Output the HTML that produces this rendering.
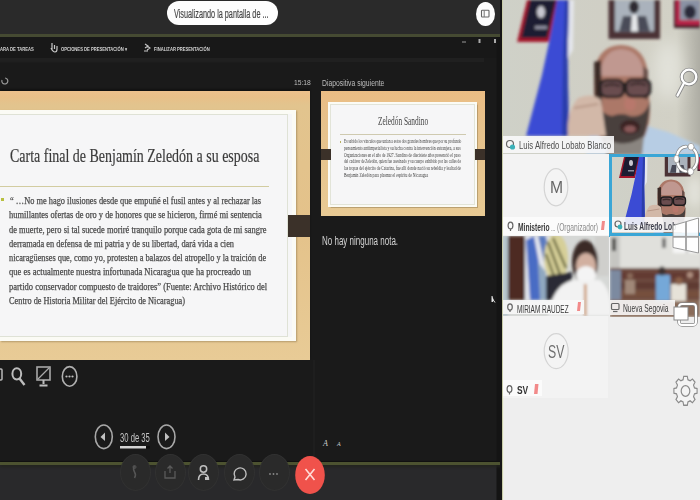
<!DOCTYPE html>
<html><head><meta charset="utf-8">
<style>
*{margin:0;padding:0;box-sizing:border-box}
html,body{width:700px;height:500px;overflow:hidden;background:#1b1b1b;font-family:"Liberation Sans",sans-serif}
.abs{position:absolute}
.sx{transform-origin:0 0}
#left{position:absolute;left:0;top:0;width:502px;height:500px;background:#1a1a1a;overflow:hidden}
#topbar{left:0;top:0;width:502px;height:34px;background:#2a2a2a}
#olive{left:0;top:34px;width:502px;height:3px;background:#454a32}
#toolbar{left:0;top:37px;width:502px;height:21px;background:#181818}
#sub{left:0;top:58px;width:484px;height:4px;background:#202020}
.tb{color:#d2d2d2;font-size:5px;font-weight:bold;top:46px;white-space:nowrap;transform-origin:0 0;transform:scaleX(0.83)}
#pill{left:166.5px;top:1.2px;width:111.5px;height:24px;border-radius:12px;background:#fdfdfd}
#pilltxt{left:174px;top:6.5px;font-size:12.5px;color:#3c3c3c;white-space:nowrap;-webkit-text-stroke:0.2px #555}
#cd{left:476px;top:1.5px;width:18.6px;height:24px;border-radius:50%;background:#fcfcfc}
#slide{left:0;top:91px;width:310px;height:269px;background:linear-gradient(180deg,#ecc08c 0px,#e8bf88 6px,#e2c48e 14px,#e4c28a 50%,#e8cb96 100%);box-shadow:0 -2px 2px rgba(0,0,0,0.35)}
#paper{left:0;top:110px;width:296px;height:231px;background:#f6f6f7;border:4px solid #fbfbf5;border-left:none;outline:none;box-shadow:1px 1px 1.5px rgba(120,100,60,0.45)}
#paperin{left:0;top:114px;width:288px;height:223px;border:1.5px solid #dfe2d6;border-left:none}
.serif{font-family:"Liberation Serif",serif}
#title{left:10px;top:146px;font-size:18.5px;color:#3a3a3a;-webkit-text-stroke:0.2px #444;filter:blur(0.3px);white-space:nowrap}
#hr{left:0;top:186px;width:269px;height:1px;background:#d2cca0}
.bl{position:absolute;left:9px;font-family:"Liberation Serif",serif;font-size:9.6px;color:#3e3e3e;-webkit-text-stroke:0.25px #555;filter:blur(0.3px);white-space:nowrap;transform-origin:0 0}
#tab{left:288px;top:215px;width:22px;height:22px;background:#3b3129}
#next{left:321px;top:91px;width:164px;height:125px;background:linear-gradient(180deg,#ebbd84 0%,#e6c28c 30%,#e8ca94 100%)}
#npaper{left:328px;top:102px;width:149px;height:105px;background:#f6f6f7;border:2px solid #fbfbf5;box-shadow:inset 0 0 0 1px #e2e4d8, 0.5px 0.5px 1px rgba(120,100,60,0.4)}
#ntitle{left:378px;top:115px;font-size:11.5px;color:#444;white-space:nowrap}
#nhr{left:340px;top:134px;width:126px;height:1px;background:#cfcab0}
.nb{position:absolute;left:344px;font-family:"Liberation Serif",serif;font-size:5.2px;color:#3a3a3a;white-space:nowrap;transform-origin:0 0}
#ntab{left:475px;top:149px;width:10px;height:11px;background:#3b3129}
#ntabl{left:321px;top:149px;width:10px;height:11px;background:#3b3129}
.gtxt{color:#bdbdbd;white-space:nowrap}
#bottombar{left:0;top:464px;width:502px;height:36px;background:#29292b}
#gline{left:0;top:461.5px;width:502px;height:3px;background:#4c5230}
.rb{position:absolute;width:31px;height:37px;border-radius:50%;background:#2a2a2a;border:1px solid #313131;top:454px}
#right{position:absolute;left:502px;top:0;width:198px;height:500px;background:#eeeeee;overflow:hidden}
.lbl{position:absolute;background:rgba(250,250,250,0.93)}
.lt{position:absolute;font-size:11px;color:#3a3a3a;white-space:nowrap;transform-origin:0 0}
</style></head><body>
<div id="left">
  <div class="abs" id="topbar"></div>
  <div class="abs" id="pill"></div>
  <div class="abs sx" id="pilltxt" style="transform:scaleX(0.582)">Visualizando la pantalla de ...</div>
  <div class="abs" id="cd"></div>
  <div class="abs" id="olive"></div>
  <div class="abs" id="toolbar"></div>
  <div class="abs" id="sub"></div>
  <div class="abs tb" style="left:0">ARA DE TAREAS</div>
  <div class="abs tb" style="left:61px">OPCIONES DE PRESENTACIÓN ▾</div>
  <div class="abs tb" style="left:154px">FINALIZAR PRESENTACIÓN</div>
  <div class="abs gtxt sx" style="left:294px;top:77.5px;font-size:8px;transform:scaleX(0.84)">15:18</div>
  <div class="abs gtxt sx" style="left:321.5px;top:77.5px;font-size:8.5px;transform:scaleX(0.8)">Diapositiva siguiente</div>
  <div class="abs" id="slide"></div>
  <div class="abs" id="paper"></div>
  <div class="abs" id="paperin"></div>
  <div class="abs serif sx" id="title" style="transform:scaleX(0.755)">Carta final de Benjamín Zeledón a su esposa</div>
  <div class="abs" id="hr"></div>
  <div class="abs" style="left:1px;top:198px;width:3px;height:3px;background:#b8c040"></div>
  <div class="bl" style="top:195px;left:10px;transform:scaleX(0.871)">“ …No me hago ilusiones desde que empuñé el fusil antes y al rechazar las</div>
  <div class="bl" style="top:209px;transform:scaleX(0.878)">humillantes ofertas de oro y de honores que se hicieron, firmé mi sentencia</div>
  <div class="bl" style="top:224px;transform:scaleX(0.877)">de muerte, pero si tal sucede moriré tranquilo porque cada gota de mi sangre</div>
  <div class="bl" style="top:238px;transform:scaleX(0.871)">derramada en defensa de mi patria y de su libertad, dará vida a cien</div>
  <div class="bl" style="top:252px;transform:scaleX(0.868)">nicaragüenses que, como yo, protesten a balazos del atropello y la traición de</div>
  <div class="bl" style="top:266px;transform:scaleX(0.890)">que es actualmente  nuestra infortunada Nicaragua que ha procreado un</div>
  <div class="bl" style="top:281px;transform:scaleX(0.884)">partido conservador compuesto de traidores” (Fuente: Archivo Histórico del</div>
  <div class="bl" style="top:295px;transform:scaleX(0.866)">Centro de Historia Militar del Ejército de Nicaragua)</div>
  <div class="abs" id="tab"></div>
  <div class="abs" id="next"></div>
  <div class="abs" id="npaper"></div>
  <div class="abs serif sx" id="ntitle" style="transform:scaleX(0.64)">Zeledón Sandino</div>
  <div class="abs" id="nhr"></div>
  <div class="nb" style="top:138.4px;transform:scaleX(0.684)">Es sabido los vínculos que unían a estos dos grandes hombres que por su profundo</div>
  <div class="nb" style="top:145.2px;transform:scaleX(0.713)">pensamiento antiimperialista y su lucha contra la intervención extranjera, a sus</div>
  <div class="nb" style="top:151.6px;transform:scaleX(0.709)">Organizaciones en el año de 1927. Sandino de diecisiete años presenció el paso</div>
  <div class="nb" style="top:158.3px;transform:scaleX(0.684)">del cadáver de Zeledón, quien fue asesinado y su cuerpo exhibido por las calles de</div>
  <div class="nb" style="top:165.1px;transform:scaleX(0.722)">las tropas del ejército de Catarina, fue allí donde nació su rebeldía y lealtad de</div>
  <div class="nb" style="top:172.2px;transform:scaleX(0.718)">Benjamín Zeledón para plasmar el espíritu de Nicaragua</div>
  <div class="abs" style="left:339.5px;top:141px;width:1.5px;height:1.5px;background:#b8b060"></div>
  <div class="abs" id="ntab"></div>
  <div class="abs" id="ntabl"></div>
  <div class="abs gtxt sx" style="left:322px;top:233.5px;font-size:12.5px;color:#d4d4d4;transform:scaleX(0.64)">No hay ninguna nota.</div>
  <div class="abs" id="gline"></div>
  <div class="abs" id="bottombar"></div>

<svg class="abs" style="left:0;top:0" width="502" height="500" viewBox="0 0 502 500">
  <!-- cd icon in circle -->
  <rect x="481.5" y="10.2" width="7.5" height="6.8" rx="0.8" fill="none" stroke="#666" stroke-width="1.1"/>
  <line x1="484.2" y1="10.5" x2="484.2" y2="17" stroke="#777" stroke-width="1"/>
  <!-- toolbar icons -->
  <path d="M52,43 v6 M54.5,45 v4 M51,48 q2,4 4,4 q2,0 2,-3 v-3" stroke="#c8c8c8" stroke-width="1.2" fill="none"/>
  <path d="M145,44 l3,2 -3,2 M147,46 l3,2 -3,2 M144,51 h4" stroke="#c8c8c8" stroke-width="1.1" fill="none"/>
  <line x1="462" y1="42" x2="466" y2="42" stroke="#999" stroke-width="1"/>
  <rect x="478.5" y="39" width="2" height="4" fill="#aaa"/>
  <rect x="494" y="39" width="2" height="4" fill="#aaa"/>
  <rect x="496.5" y="37" width="4" height="463" fill="#141414"/>
  <path d="M2,80 a3,3 0 1 0 3,-2" stroke="#999" stroke-width="1.2" fill="none"/>
  <line x1="314" y1="360" x2="314" y2="462" stroke="#222" stroke-width="1"/>
  <line x1="0" y1="62" x2="300" y2="62" stroke="#1f1f1f" stroke-width="1"/>
  <!-- bottom icons row -->
  <rect x="-3" y="369" width="5" height="11" rx="1" fill="none" stroke="#b8b8b8" stroke-width="1.5"/>
  <ellipse cx="16.8" cy="373.8" rx="4.4" ry="5.6" fill="none" stroke="#bdbdbd" stroke-width="2"/>
  <line x1="19.5" y1="378.5" x2="24.5" y2="385" stroke="#bdbdbd" stroke-width="2.4"/>
  <rect x="37" y="367" width="13" height="13" fill="none" stroke="#a8a8a8" stroke-width="1.6"/>
  <line x1="38" y1="379" x2="49" y2="368" stroke="#a8a8a8" stroke-width="1.2"/>
  <path d="M43.5,380 v4 M39.5,385.5 h8" stroke="#bdbdbd" stroke-width="2"/>
  <ellipse cx="69.6" cy="376.4" rx="7.3" ry="9.8" fill="none" stroke="#b0b0b0" stroke-width="1.6"/>
  <circle cx="66.5" cy="376.5" r="1.1" fill="#bdbdbd"/><circle cx="69.5" cy="376.5" r="1.1" fill="#bdbdbd"/><circle cx="72.5" cy="376.5" r="1.1" fill="#bdbdbd"/>
  <!-- pager -->
  <ellipse cx="103.8" cy="436.8" rx="8.5" ry="11.8" fill="none" stroke="#a8a8a8" stroke-width="1.6"/>
  <path d="M105,432.5 L100.5,437 L105,441 Z" fill="#c0c0c0"/>
  <ellipse cx="166.5" cy="436.8" rx="8.5" ry="11.8" fill="none" stroke="#a8a8a8" stroke-width="1.6"/>
  <path d="M165,432.5 L169.5,437 L165,441 Z" fill="#c0c0c0"/>
  <rect x="120" y="446" width="26" height="2.5" fill="#d4d4d4"/>
  <rect x="146" y="446" width="4" height="2.5" fill="#0d0d0d"/>
  <!-- small A's near notes -->
  <text x="323" y="446" font-family="Liberation Serif" font-size="8" fill="#cfcfcf" font-style="italic">A</text>
  <text x="337" y="446" font-family="Liberation Serif" font-size="6" fill="#cfcfcf" font-style="italic">A</text>
  <!-- cursor -->
  <path d="M492,296 l0,6 l1.5,-1.5 l1.5,2" stroke="#ddd" stroke-width="1" fill="#eee"/>
</svg>
<div class="abs" id="gline2" style="left:0;top:461.5px;width:502px;height:3px;background:#4c5230;box-shadow:0 -1px 1px #101010, 0 2px 3px #22231e"></div>
<div class="rb" style="left:120px"></div>
<div class="rb" style="left:154.5px"></div>
<div class="rb" style="left:188px"></div>
<div class="rb" style="left:223.5px"></div>
<div class="rb" style="left:259px"></div>
<svg class="abs" style="left:0;top:440px" width="502" height="60" viewBox="0 440 502 60">
  <path d="M134.5,466 q-2,3 0,6 q2,3 0,6" stroke="#555" stroke-width="1.5" fill="none"/>
  <circle cx="134.5" cy="467" r="1.5" fill="none" stroke="#555" stroke-width="1"/>
  <path d="M165,471 v7 h10 v-7 M170,466 v7 M167.5,468.5 l2.5,-2.5 2.5,2.5" stroke="#5a5a5a" stroke-width="1.3" fill="none"/>
  <circle cx="203.5" cy="469" r="3.2" fill="none" stroke="#c0c0c0" stroke-width="1.5"/>
  <path d="M198.5,480 q0,-6 5,-6 q5,0 5,6" stroke="#c0c0c0" stroke-width="1.6" fill="none"/>
  <rect x="205" y="477" width="4" height="3" fill="#c0c0c0"/>
  <path d="M234,480 l1,-3 a6,6 0 1 1 3,2.5 z" stroke="#c0c0c0" stroke-width="1.4" fill="none"/>
  <circle cx="270" cy="474" r="0.9" fill="#888"/><circle cx="273.5" cy="474" r="0.9" fill="#888"/><circle cx="277" cy="474" r="0.9" fill="#888"/>
  <ellipse cx="310" cy="475" rx="14.8" ry="19" fill="#f0524b"/>
  <path d="M305.5,469 l9,11 M314.5,469 l-9,11" stroke="#ffdcd8" stroke-width="1.6"/>
</svg>
  <div class="abs gtxt sx" style="left:120px;top:430.5px;font-size:12px;color:#c4c4c4;transform:scaleX(0.64)">30 de 35</div>
</div>
<div class="abs" style="left:500px;top:0;width:2px;height:500px;background:#161616;z-index:1"></div>
<div class="abs" style="left:501.5px;top:0;width:1px;height:500px;background:#c8cca8;z-index:1"></div>
<div id="right">
<svg width="198" height="500" viewBox="502 0 198 500" style="position:absolute;left:0;top:0">
<defs>
  <filter id="bl1" x="-10%" y="-10%" width="120%" height="120%"><feGaussianBlur stdDeviation="1.4"/></filter>
  <filter id="bl2" x="-50%" y="-50%" width="200%" height="200%"><feGaussianBlur stdDeviation="8"/></filter>
  <linearGradient id="wall1" x1="0" y1="0" x2="1" y2="0">
    <stop offset="0" stop-color="#cfd1c8"/><stop offset="0.5" stop-color="#d0cfc5"/><stop offset="0.88" stop-color="#d2d1c6"/><stop offset="1" stop-color="#aeada4"/>
  </linearGradient>
  <radialGradient id="skin" cx="0.5" cy="0.35" r="0.6">
    <stop offset="0" stop-color="#c8a898"/><stop offset="1" stop-color="#a07868"/>
  </radialGradient>
  <clipPath id="c1"><rect x="503" y="0" width="197" height="154"/></clipPath>
  <clipPath id="c2"><rect x="612" y="157" width="88" height="76"/></clipPath>
  <clipPath id="c3"><rect x="503" y="236" width="106" height="80"/></clipPath>
  <clipPath id="c4"><rect x="610" y="236" width="90" height="81"/></clipPath>
  <g id="scene1">
    <rect x="503" y="0" width="197" height="154" fill="url(#wall1)"/>
    <ellipse cx="668" cy="70" rx="14" ry="30" fill="#e2e2da" filter="url(#bl2)"/>
    <g filter="url(#bl1)">
    <polygon points="527,0 559,0 549,42 517,42" fill="#a3132a"/>
    <polygon points="530,0 556,0 547,38 521,38" fill="#1d1f30"/>
    <ellipse cx="541" cy="12" rx="4" ry="6" fill="#c8c8d0"/>
    <rect x="535" y="26" width="12" height="3" fill="#9090a0"/>
    <rect x="608.5" y="0" width="51.5" height="39" fill="#4c3236"/>
    <rect x="615" y="0" width="39" height="31.5" fill="#aab2bc"/>
    <polygon points="619,31.5 650,31.5 646,16 623,16" fill="#4a4c58"/>
    <polygon points="631,31.5 638,31.5 637,15 632,15" fill="#e6e8ea"/>
    <ellipse cx="634" cy="7" rx="5" ry="6.5" fill="#2e2a30"/>
    <rect x="674" y="0" width="26" height="28" fill="#3a1c28"/>
    <rect x="676" y="0" width="24" height="25" fill="#b82448"/>
    <rect x="680" y="0" width="20" height="20" fill="#8a92a4"/>
    <ellipse cx="690" cy="12" rx="6" ry="7" fill="#2a2c3a"/>
    <polygon points="566,0 574,0 573,50 567,60 569,136 567,136" fill="#e4e6ec"/>
    <polygon points="557,0 569,0 567.5,60 569,136 526,136 542,75 549.5,40" fill="#3a4cd4"/>
    <polygon points="565,0 569,0 567.5,60 569,136 562,136 563,60" fill="#2c3caa"/>
    <path d="M586,154 L590,132 L606,126 L640,124 L668,132 L700,146 L700,154 Z" fill="#b7cde4"/>
    <path d="M594,80 Q594,46 621,45 Q648,46 648,80 L650,112 Q648,150 622,154 Q596,150 594,112 Z" fill="#ac7868"/>
    <path d="M600,76 Q602,50 621,49 Q642,50 644,76 Z" fill="#c09890"/>
    <path d="M594,62 L601,60 L602,112 L595,110 Z" fill="#3a2c28"/>
    <path d="M643,66 L648,70 L648,100 L643,98 Z" fill="#6a5048"/>
    <path d="M596,100 Q597,154 622,155 Q648,154 650,100 Q646,118 630,116 Q622,112 612,116 Q600,114 596,100 Z" fill="#4a403c"/>
    <path d="M606,138 Q624,150 644,136 L642,155 L606,155 Z" fill="#8a8580"/>
    <ellipse cx="630" cy="127" rx="10" ry="7" fill="#3a2224"/>
    <ellipse cx="630" cy="129" rx="6" ry="3.5" fill="#8a5a5a"/>
    <ellipse cx="630" cy="104" rx="6" ry="7" fill="#b8786c"/>
    <g fill="#6a4e50" stroke="#1e1a1c" stroke-width="2.6">
    <rect x="600.5" y="80" width="23" height="17" rx="6"/>
    <rect x="626" y="79.5" width="24" height="17" rx="6"/>
    </g>
    <path d="M623,84 L626,84" stroke="#1e1a1c" stroke-width="2.5"/>
    <path d="M604,86 Q612,83 620,86 M630,85 Q638,82 646,85" stroke="#3a2a2a" stroke-width="2.5" fill="none"/>
    <path d="M568,136 Q566,112 578,98 Q592,92 601,100 L606,136 Z" fill="#d2b8a8"/>
    <path d="M574,108 L598,104" stroke="#b89888" stroke-width="2"/>
    </g>
  </g>
  <g id="scene2">
    <rect x="503" y="236" width="106" height="80" fill="#d6d8d6"/>
    <g filter="url(#bl1)">
    <rect x="503" y="236" width="5" height="80" fill="#b4c4cc"/>
    <rect x="508" y="236" width="17" height="64" fill="#4e2c24"/>
    <polygon points="525,236 550,236 552,300 525,300" fill="#e6e8ee"/>
    <polygon points="526,240 534,236 546,300 530,300" fill="#4a6cc4"/>
    <polygon points="538,236 546,236 550,262 544,262" fill="#5a7ac0"/>
    <polygon points="538,262 546,272 546,300 540,300" fill="#90a8c0"/>
    <ellipse cx="556" cy="258" rx="12" ry="24" fill="#d6cf98"/>
    <path d="M548,242 L562,280 M553,238 L566,268 M546,254 L556,282" stroke="#5a5a30" stroke-width="2.2"/>
    <polygon points="546,276 572,272 572,300 546,300" fill="#2c2c34"/>
    <rect x="595" y="236" width="14" height="40" fill="#cfcfcc"/>
    <ellipse cx="585" cy="262" rx="13" ry="22" fill="#3a2a26"/>
    <ellipse cx="586" cy="266" rx="10" ry="13" fill="#d2b0a0"/>
    <ellipse cx="586" cy="275" rx="10" ry="9" fill="#f4f4f4"/>
    <path d="M548,316 Q552,286 572,280 L600,280 Q612,290 612,316 Z" fill="#f2f2f2"/>
    <rect x="584" y="284" width="2.5" height="32" fill="#c89060"/>
    </g>
  </g>
  <g id="scene3">
    <rect x="610" y="236" width="90" height="81" fill="#d8d8d4"/>
    <g filter="url(#bl1)">
    <rect x="610" y="236" width="90" height="34" fill="#e0e0dc"/>
    <rect x="610" y="236" width="10" height="36" fill="#c6c6c2"/>
    <rect x="612" y="238" width="4" height="13" fill="#4a4a4a"/>
    <rect x="662" y="238" width="4" height="10" fill="#707070"/>
    <rect x="673" y="236" width="27" height="17" fill="#f6f6f6"/>
    <rect x="686" y="236" width="2" height="17" fill="#b8b8b8"/>
    <rect x="610" y="268" width="90" height="49" fill="#6e4c40"/>
    <rect x="616" y="272" width="84" height="7" fill="#643a32"/>
    <rect x="616" y="282" width="84" height="7" fill="#5e3a30"/>
    <rect x="616" y="291" width="84" height="6" fill="#76503e"/>
    <rect x="610" y="300" width="90" height="17" fill="#8a6c5a"/>
    <rect x="610" y="270" width="11" height="30" fill="#7c8aa0"/>
    <circle cx="630" cy="276" r="3" fill="#8a6a5a"/><rect x="625" y="280" width="10" height="14" fill="#a08878"/>
    <rect x="656" y="275" width="14" height="26" fill="#74a8d8"/>
    <ellipse cx="662" cy="271" rx="3.5" ry="4.5" fill="#3a3030"/>
    <rect x="671" y="284" width="15" height="17" fill="#e6e2d8"/>
    <ellipse cx="679" cy="281" rx="3.5" ry="4" fill="#8a6048"/>
    <circle cx="690" cy="275" r="3" fill="#b09080"/>
    </g>
  </g>
</defs>
  <rect x="502" y="0" width="198" height="500" fill="#eeeeee"/>
  <rect x="502" y="0" width="1.3" height="500" fill="#eef2cc"/>
  <rect x="503" y="154" width="106" height="82" fill="#f3f3f3"/>
  <rect x="503" y="316" width="105" height="82" fill="#f3f3f3"/>
  <ellipse cx="556" cy="187.2" rx="11.8" ry="18.6" fill="#f4f4f4" stroke="#d4d4d4" stroke-width="1.2"/>
  <ellipse cx="556.2" cy="351.1" rx="12" ry="17.5" fill="#f4f4f4" stroke="#d4d4d4" stroke-width="1.2"/>
  <g clip-path="url(#c1)"><use href="#scene1"/></g>
  <rect x="609" y="154" width="91" height="83" fill="#3aa6d6"/>
  <g clip-path="url(#c2)"><use href="#scene1" transform="translate(360.5,157) scale(0.5)"/></g>
  <g clip-path="url(#c3)"><use href="#scene2"/></g>
  <g clip-path="url(#c4)"><use href="#scene3"/></g>
</svg>
</div>

<div class="lbl" style="left:503px;top:135.5px;width:111px;height:17px;background:rgba(248,248,250,0.9)"></div>
<div class="lbl" style="left:503px;top:216.5px;width:106px;height:18px;background:#fbfbfb"></div>
<div class="lbl" style="left:612px;top:217px;width:88px;height:15px;background:rgba(248,248,250,0.9)"></div>
<div class="lbl" style="left:503px;top:300px;width:81px;height:14px;background:rgba(248,248,248,0.9)"></div>
<div class="lbl" style="left:610px;top:299.5px;width:65px;height:15px;background:rgba(248,248,248,0.9)"></div>
<div class="lbl" style="left:503px;top:380px;width:39px;height:16px;background:#fbfbfb"></div>
<svg class="abs" style="left:502px;top:130px" width="198" height="275" viewBox="502 130 198 275">
  <g fill="none" stroke="#666" stroke-width="1.2">
    <circle cx="510" cy="144" r="3.5"/>
    <circle cx="618" cy="224" r="3"/>
    <ellipse cx="510.5" cy="225.5" rx="2.4" ry="3.3"/>
    <ellipse cx="510" cy="307" rx="2.3" ry="3.1"/>
    <ellipse cx="509.5" cy="389" rx="2.4" ry="3.3"/>
    <path d="M510.5,229 v2 M510,310 v2 M509.5,392.5 v2"/>
    <rect x="611.5" y="303.5" width="7.5" height="6" rx="1"/>
    <path d="M613,311.5 h4.5"/>
  </g>
  <circle cx="512.5" cy="147" r="2.6" fill="#3bb0b8"/>
  <circle cx="620" cy="227" r="2.4" fill="#3bb0b8"/>
  <g fill="#f28a8a">
    <path d="M602,221 h3 l-1,9 h-3 z"/>
    <path d="M578,302 h3 l-1,9 h-3 z"/>
    <path d="M535,384 h3.5 l-1,10 h-3.5 z"/>
  </g>
</svg>
<div class="lt" style="left:519px;top:139px;font-size:10.5px;color:#505050;transform:scaleX(0.736)">Luis Alfredo Lobato Blanco</div>
<div class="lt" style="left:518px;top:220.5px;font-size:10.5px;font-weight:bold;color:#3a3a3a;transform:scaleX(0.635)">Ministerio <span style="font-weight:normal;font-size:7px">...</span> <span style="font-weight:normal;color:#8a8a8a">(Organizador)</span></div>
<div class="lt" style="left:624px;top:221px;font-size:10px;font-weight:bold;color:#3c3c48;transform:scaleX(0.66)">Luis Alfredo Lob</div>
<div class="lt" style="left:517px;top:302.5px;font-size:10.5px;color:#3a3a3a;transform:scaleX(0.614)">MIRIAM RAUDEZ</div>
<div class="lt" style="left:623px;top:302px;font-size:11px;color:#3a3a3a;transform:scaleX(0.61)">Nueva Segovia</div>
<div class="lt" style="left:517px;top:383.5px;font-size:10.5px;font-weight:bold;color:#333;transform:scaleX(0.8)">SV</div>
<div class="lt" style="left:549.8px;top:178px;font-size:16.5px;color:#666;transform:scaleX(0.95)">M</div>
<div class="lt" style="left:548px;top:341.5px;font-size:17.5px;color:#6e6e6e;transform:scaleX(0.7)">SV</div>
<svg class="abs" style="left:640px;top:50px" width="60" height="370" viewBox="640 50 60 370">
  <g fill="none" stroke-linecap="round">
    <!-- magnifier -->
    <g stroke="#8a8a8a" stroke-width="4"><circle cx="689" cy="77" r="7.3"/><line x1="684" y1="83" x2="677.5" y2="95.5"/></g>
    <g stroke="#ffffff" stroke-width="2.3"><circle cx="689" cy="77" r="7.3"/><line x1="684" y1="83" x2="677.5" y2="95.5"/></g>
    <!-- share arc -->
    <g stroke="#888" stroke-width="3.8"><path d="M693.5,149 A10,12.5 0 0 1 693,169"/><path d="M677,155 A10,12.5 0 0 1 686,146.6" /><path d="M677.5,163 A10,12.5 0 0 0 686,171.4"/></g>
    <g stroke="#fff" stroke-width="2.3"><path d="M693.5,149 A10,12.5 0 0 1 693,169"/><path d="M677,155 A10,12.5 0 0 1 686,146.6" /><path d="M677.5,163 A10,12.5 0 0 0 686,171.4"/></g>
  </g>
  <g fill="#fff" stroke="#999" stroke-width="0.8"><ellipse cx="691" cy="146.7" rx="3" ry="3.4"/><ellipse cx="676.5" cy="159" rx="2.8" ry="3.8"/><ellipse cx="690.7" cy="171.5" rx="3" ry="3.4"/></g>
  <!-- windows logo -->
  <polygon points="673,225.5 698.5,218 698.5,253 673,247.5" fill="rgba(255,255,255,0.9)" stroke="#9a9a9a" stroke-width="1"/>
  <line x1="686" y1="222" x2="686" y2="250.5" stroke="#a0a0a0" stroke-width="1.8"/>
  <line x1="673" y1="236.8" x2="698.5" y2="236.8" stroke="#a0a0a0" stroke-width="1.8"/>
  <!-- two squares -->
  <rect x="679" y="304" width="17" height="21" rx="3" fill="none" stroke="#888" stroke-width="3.5"/>
  <rect x="679" y="304" width="17" height="21" rx="3" fill="none" stroke="#fff" stroke-width="2"/>
  <rect x="674" y="307" width="14" height="13" fill="#fff" stroke="#888" stroke-width="1"/>
  <!-- gear -->
  <g transform="translate(685.5,391) scale(0.9,1.12)">
    <path id="gear" d="M-2.2,-12.5 L2.2,-12.5 L2.9,-9.3 L5.6,-8.2 L8.4,-10 L11.5,-6.9 L9.7,-4.1 L10.8,-1.4 L14,-0.7 L14,3.7 L10.8,4.4 L9.7,7.1 L11.5,9.9 L8.4,13 L5.6,11.2 L2.9,12.3 L2.2,15.5 L-2.2,15.5 L-2.9,12.3 L-5.6,11.2 L-8.4,13 L-11.5,9.9 L-9.7,7.1 L-10.8,4.4 L-14,3.7 L-14,-0.7 L-10.8,-1.4 L-9.7,-4.1 L-11.5,-6.9 L-8.4,-10 L-5.6,-8.2 L-2.9,-9.3 Z" transform="translate(0,-1.5) scale(0.92)" fill="#f4f4f4" stroke="#8a8a8a" stroke-width="1.3"/>
    <circle cx="0" cy="0" r="4.8" fill="#f4f4f4" stroke="#8a8a8a" stroke-width="1.3"/>
  </g>
</svg>
</body></html>
